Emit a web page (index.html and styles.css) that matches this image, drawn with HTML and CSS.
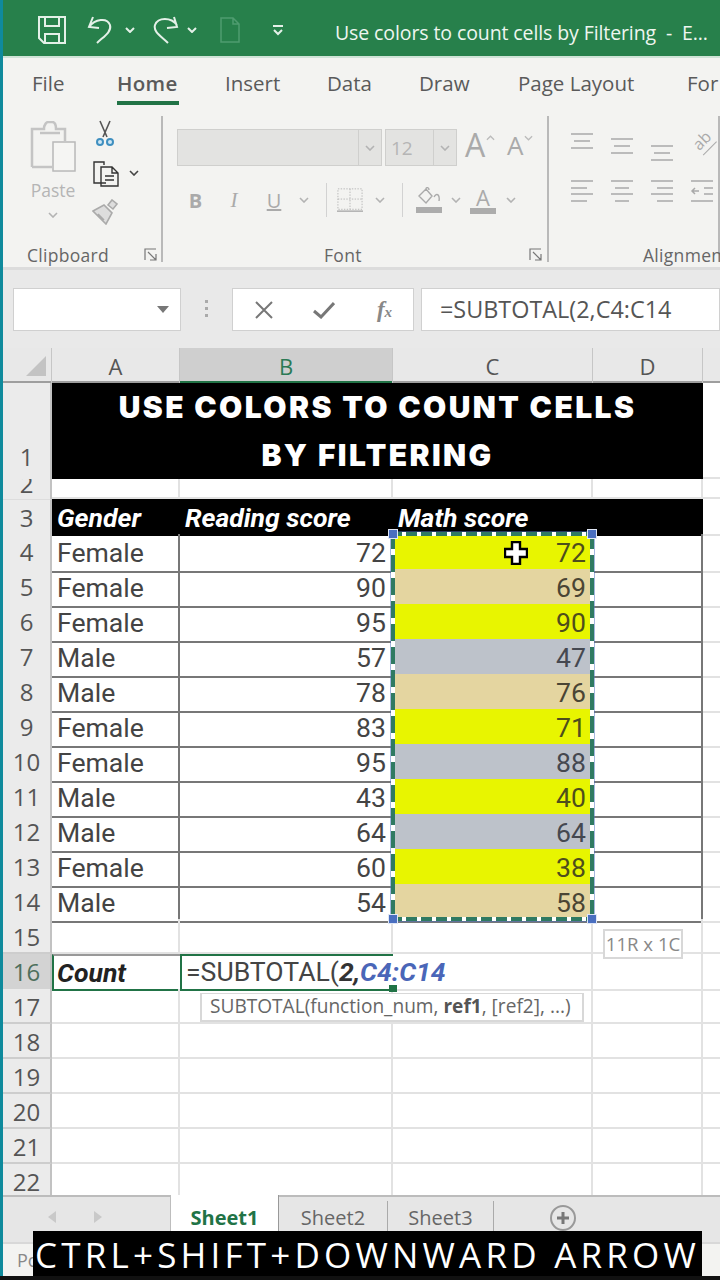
FILE: index.html
```html
<!DOCTYPE html>
<html lang="en">
<head>
<meta charset="utf-8">
<title>Use colors to count cells by Filtering</title>
<link rel="stylesheet" href="styles.css">
</head>
<body>
<div class="app">
  <header class="titlebar">
    <svg class="ti save" viewBox="0 0 28 28"><path d="M1 1H27V27H6L1 22Z M7 1V10H21V1 M7 27V18H21V27"/></svg>
    <svg class="ti undo" viewBox="0 0 26 28"><path d="M6 1L2 11L12 12 M2 11C8 3 20 1 23 9C25 16 16 21 10 27"/></svg>
    <svg class="chev-w" viewBox="0 0 10 6"><path d="M1 1L5 5L9 1"/></svg>
    <svg class="ti redo" viewBox="0 0 26 28"><path d="M21 1L24 11L14 12 M24 9C18 1 5 1 2 9C0 16 8 20 15 27"/></svg>
    <svg class="chev-w" viewBox="0 0 10 6"><path d="M1 1L5 5L9 1"/></svg>
    <svg class="ti doc" viewBox="0 0 20 26"><path d="M1 1H13L19 7V25H1Z M13 1V7H19"/></svg>
    <svg class="ti cust" viewBox="0 0 12 11"><path d="M1 1H11 M2 5L6 9L10 5"/></svg>
    <div class="doc-title">Use colors to count cells by Filtering &nbsp;-&nbsp; E...</div>
  </header>

  <nav class="tabs">
    <span>File</span><span class="active">Home</span><span>Insert</span><span>Data</span><span>Draw</span><span>Page Layout</span><span>For</span>
  </nav>

  <section class="ribbon">
    <div class="group clip">
      <div class="group-main clip-main">
        <div class="paste">
          <svg class="paste-ic" viewBox="0 0 46 52"><path class="g1" d="M2 46V8H14C14 3 17 1 18 1H22C25 1 26 4 26 8H35V20"/><path class="g1" d="M2 46H22"/><path class="g1" d="M10 12H30"/><rect class="g2" x="23" y="21" width="22" height="29"/></svg>
          <span>Paste</span>
          <svg class="chev" viewBox="0 0 10 6"><path d="M1 1L5 5L9 1"/></svg>
        </div>
        <div class="clip-tools">
          <svg class="cut" viewBox="0 0 18 26"><path d="M4 1L11 17 M14 1L7 17"/><circle cx="4" cy="22" r="3"/><circle cx="14" cy="22" r="3"/></svg>
          <span class="copy-wrap">
            <svg class="copy" viewBox="0 0 28 27"><path d="M14 23H2V2H12V5 M9 7H20L26 13V26H9Z M20 7V13H26 M13 16H22 M13 20H22"/></svg>
            <svg class="chev dark" viewBox="0 0 10 6"><path d="M1 1L5 5L9 1"/></svg>
          </span>
          <svg class="brush" viewBox="0 0 26 26"><path d="M16 6L20 1L25 5L21 10Z M1 12L12 6L20 14L14 25Z M6 15L12 21"/></svg>
        </div>
      </div>
      <div class="group-label clip-label"><span>Clipboard</span><svg class="launch" viewBox="0 0 14 14"><path d="M1 12V1H12 M4 4L12 12 M12 6V12H6"/></svg></div>
    </div>

    <div class="group font">
      <div class="group-main">
        <div class="font-r1">
          <div class="combo c-name"><i></i><b><svg class="chev" viewBox="0 0 10 6"><path d="M1 1L5 5L9 1"/></svg></b></div>
          <div class="combo c-size"><i>12</i><b><svg class="chev" viewBox="0 0 10 6"><path d="M1 1L5 5L9 1"/></svg></b></div>
          <span class="grow big">A<svg class="caret" viewBox="0 0 10 6"><path d="M1 5L5 1L9 5"/></svg></span>
          <span class="grow small">A<svg class="caret" viewBox="0 0 10 6"><path d="M1 1L5 5L9 1"/></svg></span>
        </div>
        <div class="font-r2">
          <span class="t-b">B</span><span class="t-i">I</span><span class="t-u">U</span>
          <svg class="chev" viewBox="0 0 10 6"><path d="M1 1L5 5L9 1"/></svg>
          <span class="vsep"></span>
          <svg class="borders" viewBox="0 0 28 26"><path class="dots" d="M1 1H27V23H1Z M14 1V23 M1 12H27"/><path d="M0 25H28"/></svg>
          <svg class="chev" viewBox="0 0 10 6"><path d="M1 1L5 5L9 1"/></svg>
          <span class="vsep"></span>
          <span class="fillbtn"><svg viewBox="0 0 26 20"><path d="M3 9L10 2L16 9L10 16Z M10 2C10 0 13 0 13 3 M18 10C21 5 24 8 23 14"/></svg><em></em></span>
          <svg class="chev" viewBox="0 0 10 6"><path d="M1 1L5 5L9 1"/></svg>
          <span class="colorbtn">A<em></em></span>
          <svg class="chev" viewBox="0 0 10 6"><path d="M1 1L5 5L9 1"/></svg>
        </div>
      </div>
      <div class="group-label font-label"><span>Font</span><svg class="launch" viewBox="0 0 14 14"><path d="M1 12V1H12 M4 4L12 12 M12 6V12H6"/></svg></div>
    </div>

    <div class="group align">
      <div class="group-main">
        <div class="align-r1">
          <svg class="al top" viewBox="0 0 24 16"><path d="M1 1H23 M4 8H20 M1 15H23"/></svg>
          <svg class="al mid" viewBox="0 0 24 16"><path d="M1 1H23 M4 8H20 M1 15H23"/></svg>
          <svg class="al bot" viewBox="0 0 24 16"><path d="M1 1H23 M4 8H20 M1 15H23"/></svg>
          <span class="orient">ab</span>
        </div>
        <div class="align-r2">
          <svg class="al" viewBox="0 0 24 22"><path d="M1 1H23 M1 8H17 M1 14H23 M1 21H17"/></svg>
          <svg class="al" viewBox="0 0 24 22"><path d="M1 1H23 M5 8H19 M1 14H23 M5 21H19"/></svg>
          <svg class="al" viewBox="0 0 24 22"><path d="M1 1H23 M7 8H23 M1 14H23 M7 21H23"/></svg>
          <svg class="al" viewBox="0 0 24 22"><path d="M1 1H23 M14 8H23 M14 14H23 M1 21H23 M9 11H2 M5 8L2 11L5 14"/></svg>
        </div>
      </div>
      <div class="group-label align-label"><span>Alignment</span></div>
    </div>
  </section>

  <section class="fbar">
    <div class="namebox"><svg viewBox="0 0 12 7"><path d="M0 0H12L6 7Z"/></svg></div>
    <div class="dots-v"><i></i><i></i><i></i></div>
    <div class="fx-btns">
      <svg class="fx-x" viewBox="0 0 18 18"><path d="M1 1L17 17 M17 1L1 17"/></svg>
      <svg class="fx-c" viewBox="0 0 22 18"><path d="M1 10L8 16L21 2"/></svg>
      <span class="fx">f<sub>x</sub></span>
    </div>
    <div class="finput">=SUBTOTAL(2,C4:C14</div>
  </section>

  <section class="sheet">
    <div class="colhead">
      <div class="corner"><svg viewBox="0 0 20 20"><path d="M20 0V20H0Z"/></svg></div>
      <div>A</div><div class="sel">B</div><div>C</div><div>D</div><div class="blank"></div>
    </div>

    <div class="r r1"><div class="rn">1</div><div class="title">USE COLORS TO COUNT CELLS<br>BY FILTERING</div><div class="c e"></div></div>
    <div class="r r2"><div class="rn">2</div><div class="c"></div><div class="c"></div><div class="c"></div><div class="c"></div><div class="c e"></div></div>
    <div class="r hd"><div class="rn">3</div><div class="c">Gender</div><div class="c">Reading score</div><div class="c">Math score</div><div class="c"></div><div class="c e"></div></div>

    <div class="r"><div class="rn">4</div><div class="c d">Female</div><div class="c d n">72</div><div class="c d n y">72</div><div class="c d"></div><div class="c e"></div></div>
    <div class="r"><div class="rn">5</div><div class="c d">Female</div><div class="c d n">90</div><div class="c d n t">69</div><div class="c d"></div><div class="c e"></div></div>
    <div class="r"><div class="rn">6</div><div class="c d">Female</div><div class="c d n">95</div><div class="c d n y">90</div><div class="c d"></div><div class="c e"></div></div>
    <div class="r"><div class="rn">7</div><div class="c d">Male</div><div class="c d n">57</div><div class="c d n g">47</div><div class="c d"></div><div class="c e"></div></div>
    <div class="r"><div class="rn">8</div><div class="c d">Male</div><div class="c d n">78</div><div class="c d n t">76</div><div class="c d"></div><div class="c e"></div></div>
    <div class="r"><div class="rn">9</div><div class="c d">Female</div><div class="c d n">83</div><div class="c d n y">71</div><div class="c d"></div><div class="c e"></div></div>
    <div class="r"><div class="rn">10</div><div class="c d">Female</div><div class="c d n">95</div><div class="c d n g">88</div><div class="c d"></div><div class="c e"></div></div>
    <div class="r"><div class="rn">11</div><div class="c d">Male</div><div class="c d n">43</div><div class="c d n y">40</div><div class="c d"></div><div class="c e"></div></div>
    <div class="r"><div class="rn">12</div><div class="c d">Male</div><div class="c d n">64</div><div class="c d n g">64</div><div class="c d"></div><div class="c e"></div></div>
    <div class="r"><div class="rn">13</div><div class="c d">Female</div><div class="c d n">60</div><div class="c d n y">38</div><div class="c d"></div><div class="c e"></div></div>
    <div class="r"><div class="rn">14</div><div class="c d">Male</div><div class="c d n">54</div><div class="c d n t">58</div><div class="c d"></div><div class="c e"></div></div>

    <div class="r"><div class="rn">15</div><div class="c"></div><div class="c"></div><div class="c"></div><div class="c"></div><div class="c e"></div></div>
    <div class="r rs"><div class="rn">16</div><div class="c count">Count</div><div class="c edit">=SUBTOTAL(<b>2,</b><strong>C4:C14</strong><i class="edit-h"></i></div><div class="c"></div><div class="c"></div><div class="c e"></div></div>
    <div class="r"><div class="rn">17</div><div class="c"></div><div class="c"></div><div class="c"></div><div class="c"></div><div class="c e"></div></div>
    <div class="r"><div class="rn">18</div><div class="c"></div><div class="c"></div><div class="c"></div><div class="c"></div><div class="c e"></div></div>
    <div class="r"><div class="rn">19</div><div class="c"></div><div class="c"></div><div class="c"></div><div class="c"></div><div class="c e"></div></div>
    <div class="r"><div class="rn">20</div><div class="c"></div><div class="c"></div><div class="c"></div><div class="c"></div><div class="c e"></div></div>
    <div class="r"><div class="rn">21</div><div class="c"></div><div class="c"></div><div class="c"></div><div class="c"></div><div class="c e"></div></div>
    <div class="r r22"><div class="rn">22</div><div class="c"></div><div class="c"></div><div class="c"></div><div class="c"></div><div class="c e"></div></div>

    <div class="marquee">
      <i class="h tl"></i><i class="h tr"></i><i class="h bl"></i><i class="h br"></i>
      <svg class="cursor" viewBox="0 0 24 24"><path d="M8 1H16V8H23V16H16V23H8V16H1V8H8Z"/></svg>
    </div>
    <div class="tip-size">11R x 1C</div>
    <div class="tip-fn">SUBTOTAL(function_num, <b>ref1</b>, [ref2], ...)</div>
  </section>

  <footer class="sheetbar">
    <div class="navs"><svg viewBox="0 0 8 12"><path d="M8 0V12L0 6Z"/></svg><svg viewBox="0 0 8 12"><path d="M0 0V12L8 6Z"/></svg></div>
    <div class="stab on">Sheet1</div>
    <div class="stab">Sheet2</div>
    <div class="stab last">Sheet3</div>
    <svg class="plus" viewBox="0 0 26 26"><circle cx="13" cy="13" r="12"/><path d="M13 7V19 M7 13H19"/></svg>
  </footer>
  <div class="status">Po</div>
  <div class="caption">CTRL+SHIFT+DOWNWARD ARROW</div>
</div>
</body>
</html>
```

FILE: styles.css
```css
* { box-sizing: border-box; }
html, body { margin: 0; padding: 0; }
body { background: #111; width: 720px; height: 1280px; overflow: hidden; font-family: "Open Sans", "Noto Sans", sans-serif; }
.app { position: relative; width: 720px; height: 1276px; border-left: 3px solid #0f8a9c; background: #f3f3f1; overflow: hidden; }
svg { display: block; fill: none; }

/* title bar */
.titlebar { height: 58px; margin-left: -3px; padding: 4px 0 0 38px; background: #27804b; display: flex; align-items: center; border-bottom: 2px solid #cfe3d6; color: #eef6f0; }
.ti path { stroke: #e4f0e8; stroke-width: 2; }
.save { width: 28px; height: 28px; }
.undo { width: 26px; height: 28px; margin-left: 21px; }
.chev-w { width: 10px; height: 6px; margin-left: 12px; }
.chev-w path { stroke: #e4f0e8; stroke-width: 2; }
.redo { width: 26px; height: 28px; margin-left: 18px; }
.redo + .chev-w { margin-left: 8px; }
.doc { width: 20px; height: 26px; margin-left: 23px; }
.doc path { stroke: #4f9c70; stroke-width: 1.5; }
.cust { width: 12px; height: 11px; margin-left: 32px; }
.doc-title { margin: 5px 0 0 51px; font-size: 19.5px; white-space: nowrap; letter-spacing: -0.1px; }

/* ribbon tabs */
.tabs { height: 52px; padding: 11px 0 0 29px; display: grid; grid-template-columns: 85px 108px 102px 92px 99px 169px 60px; font-size: 20.5px; line-height: 28px; color: #5a5a5a; white-space: nowrap; }
.tabs .active { font-weight: 600; position: relative; letter-spacing: 0.3px; }
.tabs .active::after { content: ""; position: absolute; left: 0; top: 32px; width: 62px; height: 4px; background: #217346; }

/* ribbon */
.ribbon { height: 160px; display: flex; overflow: hidden; border-bottom: 3px solid #dcdcdc; color: #aaa; }
.group { flex: none; height: 146px; margin-top: 6px; border-right: 2px solid #b9b9b9; display: flex; flex-direction: column; }
.group-main { flex: none; height: 126px; }
.group-label { flex: none; display: flex; align-items: center; height: 26px; font-size: 17.5px; color: #666; letter-spacing: 0.3px; white-space: nowrap; }
.chev { width: 10px; height: 6px; }
.chev path { stroke: #b3b3b3; stroke-width: 1.6; }
.chev.dark path { stroke: #444; }
.launch { width: 14px; height: 14px; margin-left: auto; }
.launch path { stroke: #777; stroke-width: 1.2; }

.clip { width: 160px; }
.clip-main { display: flex; padding-left: 23px; }
.paste { width: 54px; display: flex; flex-direction: column; align-items: center; color: #b5b5b5; font-size: 17.5px; line-height: 24px; }
.paste-ic { flex: none; width: 46px; height: 52px; margin-top: 5px; }
.paste span { margin-top: 5px; }
.paste .chev { margin-top: 10px; }
.g1 { stroke: #c4c4c4; stroke-width: 2.5; }
.g2 { stroke: #b8b8b8; stroke-width: 1.5; fill: #f5f5f3; }
.clip-tools { margin-left: 12px; display: grid; grid-template-rows: 34px 46px 32px; justify-items: start; align-items: center; width: 60px; }
.cut { width: 18px; height: 26px; margin-left: 4px; }
.cut path { stroke: #555; stroke-width: 1.6; }
.cut circle { stroke: #3f8fc0; stroke-width: 2; fill: #cfe6f4; }
.copy-wrap { display: flex; align-items: center; gap: 9px; }
.copy { width: 28px; height: 27px; }
.copy path { stroke: #333; stroke-width: 1.4; }
.brush { width: 26px; height: 26px; }
.brush path { stroke: #aaa; stroke-width: 1.6; fill: #ddd; }
.clip-label { padding: 0 3px 0 24px; }

.font { width: 386px; }
.font > .group-main { padding: 13px 0 0 14px; }
.font-r1 { display: flex; align-items: center; height: 37px; }
.combo { height: 37px; display: flex; background: #e3e3e1; border: 1px solid #cfcfcd; }
.combo i { flex: 1; font-style: normal; font-size: 19px; line-height: 37px; color: #b5b5b5; padding-left: 5px; }
.combo b { width: 23px; border-left: 1px solid #cfcfcd; display: flex; align-items: center; justify-content: center; }
.c-name { width: 205px; }
.c-size { width: 72px; margin-left: 3px; }
.grow { display: flex; align-items: flex-start; color: #aaa; line-height: 32px; font-weight: 400; margin-top: -6px; }
.big { font-size: 32px; margin-left: 8px; width: 40px; }
.small { font-size: 26px; width: 30px; margin-left: 2px; }
.caret { width: 9px; height: 6px; margin: 6px 0 0 1px; }
.caret path { stroke: #bbb; stroke-width: 1.4; }
.font-r2 { height: 34px; margin-top: 17px; display: grid; grid-template-columns: 37px 40px 40px 20px 24px 24px 36px 8px 46px 8px 46px 10px; place-items: center; color: #aaa; font-size: 20px; }
.t-b { font-weight: 700; }
.t-i { font-style: italic; font-family: "Liberation Serif", serif; font-size: 21px; }
.t-u { text-decoration: underline; }
.vsep { width: 1px; height: 34px; background: #d2d2d2; }
.borders { width: 26px; height: 26px; }
.borders .dots { stroke: #b5b5b5; stroke-width: 1; stroke-dasharray: 1.5 1.5; }
.borders path { stroke: #aaa; stroke-width: 1.5; }
.fillbtn { width: 26px; display: block; }
.fillbtn svg { width: 26px; height: 20px; }
.fillbtn path { stroke: #aaa; stroke-width: 1.4; }
.fillbtn em, .colorbtn em { display: block; height: 6px; background: #acacac; }
.colorbtn { width: 26px; text-align: center; font-size: 22px; line-height: 22px; color: #aaa; }
.font-label { padding: 0 4px 0 161px; }

.align { width: 171px; }
.align > .group-main { padding: 12px 0 0 13px; }
.al { width: 24px; }
.al path { stroke: #a9a9a9; stroke-width: 1.5; }
.align-r1, .align-r2 { display: grid; grid-template-columns: 40px 40px 40px 40px; justify-items: center; }
.align-r1 { height: 40px; }
.al.top { height: 16px; margin-top: 5px; }
.al.mid { height: 16px; margin-top: 10px; }
.al.bot { height: 16px; margin-top: 17px; }
.orient { font-size: 16px; line-height: 20px; transform: rotate(-45deg); border-bottom: 1px solid #aaa; margin-top: 2px; height: 22px; }
.align-r2 { margin-top: 12px; }
.al:not(.top):not(.mid):not(.bot) { height: 22px; }
.align-label { padding-left: 94px; }

/* formula bar */
.fbar { height: 78px; background: #e9e9e9; display: flex; padding-top: 18px; }
.namebox { width: 168px; height: 43px; margin-left: 10px; background: #fff; border: 1px solid #d0d0d0; display: flex; align-items: center; justify-content: flex-end; padding-right: 11px; }
.namebox svg { width: 12px; height: 7px; }
.namebox path { fill: #777; }
.dots-v { width: 51px; display: flex; flex-direction: column; align-items: center; gap: 4px; padding-top: 12px; }
.dots-v i { width: 3px; height: 3px; background: #aaa; }
.fx-btns { width: 182px; height: 43px; background: #fff; border: 1px solid #d0d0d0; display: grid; grid-template-columns: 61px 60px 61px; place-items: center; }
.fx-x { width: 18px; height: 18px; }
.fx-x path { stroke: #777; stroke-width: 2; }
.fx-c { width: 22px; height: 18px; }
.fx-c path { stroke: #777; stroke-width: 3; }
.fx { font-family: "Liberation Serif", serif; font-style: italic; font-weight: 700; font-size: 23px; color: #888; }
.fx sub { font-size: 15px; vertical-align: baseline; }
.finput { flex: 1; height: 43px; margin-left: 7px; background: #fff; border: 1px solid #d0d0d0; padding-left: 18px; font-size: 23.4px; line-height: 41px; color: #555; white-space: nowrap; overflow: hidden; }

/* sheet */
.sheet { position: relative; background: #fff; height: 847px; overflow: hidden; font-family: Roboto, "Open Sans", sans-serif; }
.colhead, .r { display: grid; grid-template-columns: 49px 128px 213px 200px 110px 17px; }
.colhead { height: 35px; background: #e8e8e8; font-family: "Open Sans", sans-serif; font-size: 22px; color: #555; text-align: center; line-height: 36px; border-bottom: 2px solid #9e9e9e; }
.colhead > div { border-right: 1px solid #c6c6c6; }
.corner { display: flex; justify-content: flex-end; align-items: flex-start; padding: 8px 5px 0 0; }
.corner svg { width: 20px; height: 20px; }
.corner path { fill: #c3c3c3; }
.colhead .sel { background: #cfcfcf; color: #2b7a55; box-shadow: inset 0 -2px 0 #217346; height: 35px; }
.colhead .blank { border: 0; }
.r { height: 35px; font-size: 26.6px; color: #444; }
.rn { background: #ebebeb; border-bottom: 2px solid #cdcdcd; border-right: 2px solid #c2c2c2; font-family: "Open Sans", sans-serif; font-size: 24px; color: #555; text-align: center; line-height: 36px; overflow: hidden; }
.c { border-right: 2px solid #e2e2e2; border-bottom: 2px solid #e2e2e2; padding: 0 5px; line-height: 37px; white-space: nowrap; }
.c.e { border-right: 0; }
.c.d { border-color: #777; border-width: 0 2px 2px 0; }
.n { text-align: right; }
.y { background: #e8f500; color: #4e4e1c; }
.t { background: #e4d5a0; color: #4a4534; }
.g { background: #bdc2ca; color: #454850; }
.r1 { height: 96px; }
.r1 .rn { line-height: 28px; padding-top: 60px; border-bottom: 0; }
.title { grid-column: 2 / 6; background: #000; color: #fff; font-family: Inter, sans-serif; font-weight: 900; font-size: 30px; line-height: 48px; letter-spacing: 2.4px; text-align: center; white-space: nowrap; }
.r2 { height: 20px; }
.r2 .rn { line-height: 10px; border-bottom: 0; }
.hd .c { background: #000; color: #fff; font-weight: 700; font-style: italic; border: 0; }
.hd .c.e { background: #fff; border-bottom: 2px solid #e2e2e2; }
.hd .rn { border-top: 1px solid #ddd; }
.rs .rn { background: #d3d3d3; color: #4d6f5c; }
.count { font-weight: 700; font-style: italic; color: #222; border-top: 2px solid #999; border-left: 2px solid #217346; border-bottom: 2px solid #217346; border-right: 0; padding-left: 3px; line-height: 33px; }
.edit { position: relative; border: 2px solid #217346; border-right: 0; padding-left: 4px; line-height: 32px; }
.edit b { font-weight: 700; font-style: italic; color: #333; }
.edit strong { font-weight: 700; font-style: italic; color: #4a66b8; }
.edit-h { position: absolute; right: -4px; bottom: -3px; width: 8px; height: 7px; background: #217346; }
.r22 { height: 31px; }
.r22 .rn { border-bottom: 0; }
.r22 .c { border-bottom: 0; }

.marquee { position: absolute; left: 388px; top: 184px; width: 203px; height: 389px; box-shadow: 0 0 0 1px rgba(74,111,192,.5);
  background:
    repeating-linear-gradient(90deg, #2f7a62 0 11px, #fff 11px 15px) 0 0 / 100% 4px no-repeat,
    repeating-linear-gradient(90deg, #2f7a62 0 11px, #fff 11px 15px) 0 100% / 100% 4px no-repeat,
    repeating-linear-gradient(180deg, #2f7a62 0 17px, #fff 17px 23px) 0 0 / 4px 100% no-repeat,
    repeating-linear-gradient(180deg, #2f7a62 0 17px, #fff 17px 23px) 100% 0 / 4px 100% no-repeat; }
.h { position: absolute; width: 10px; height: 10px; background: #4a6fc0; border: 1px solid #dfe6f5; }
.tl { left: -3px; top: -3px; }
.tr { right: -3px; top: -3px; }
.bl { left: -3px; bottom: -3px; }
.br { right: -3px; bottom: -3px; }
.cursor { position: absolute; left: 113px; top: 9px; width: 24px; height: 24px; }
.cursor path { fill: #fff; stroke: #000; stroke-width: 2.4; }
.tip-size { position: absolute; left: 600px; top: 581px; width: 80px; height: 30px; background: #fff; border: 2px solid #d8d8d8; font-family: "Open Sans", sans-serif; font-size: 18.6px; line-height: 26px; text-align: center; color: #888; white-space: nowrap; overflow: hidden; }
.tip-fn { position: absolute; left: 197px; top: 645px; width: 384px; height: 29px; background: #fff; border: 2px solid #d8d8d8; border-top-width: 1px; padding-left: 8px; font-family: "Open Sans", sans-serif; font-size: 19.1px; line-height: 25px; color: #666; white-space: nowrap; overflow: hidden; }
.tip-fn b { color: #555; }

/* sheet tabs */
.sheetbar { height: 47px; background: #e6e6e6; border-top: 2px solid #bcbcbc; display: flex; align-items: stretch; font-size: 20px; color: #666; }
.navs { width: 168px; border-right: 1px solid #bdbdbd; display: flex; justify-content: flex-start; padding: 14px 0 0 45px; gap: 38px; }
.navs svg { width: 8px; height: 12px; }
.navs path { fill: #c9c9c9; }
.stab { width: 109px; border-right: 1px solid #aaa; text-align: center; line-height: 34px; margin-top: 4px; }
.stab.on { width: 108px; background: #fff; color: #217346; font-weight: 700; margin-top: -2px; line-height: 45px; border-right: 1px solid #999; }
.stab.last { width: 106px; }
.plus { width: 26px; height: 26px; margin: 8px 0 0 56px; }
.plus circle { stroke: #999; stroke-width: 2; }
.plus path { stroke: #777; stroke-width: 3; }
.status { height: 34px; background: #f3f3f1; border-top: 2px solid #d8d8d8; padding-left: 14px; font-size: 18px; line-height: 32px; color: #888; }
.caption { position: absolute; left: 30px; bottom: -4px; width: 669px; height: 49px; background: #000; color: #fff; font-size: 35px; font-weight: 500; line-height: 47px; letter-spacing: 4.2px; text-align: center; white-space: nowrap; overflow: hidden; }
```
